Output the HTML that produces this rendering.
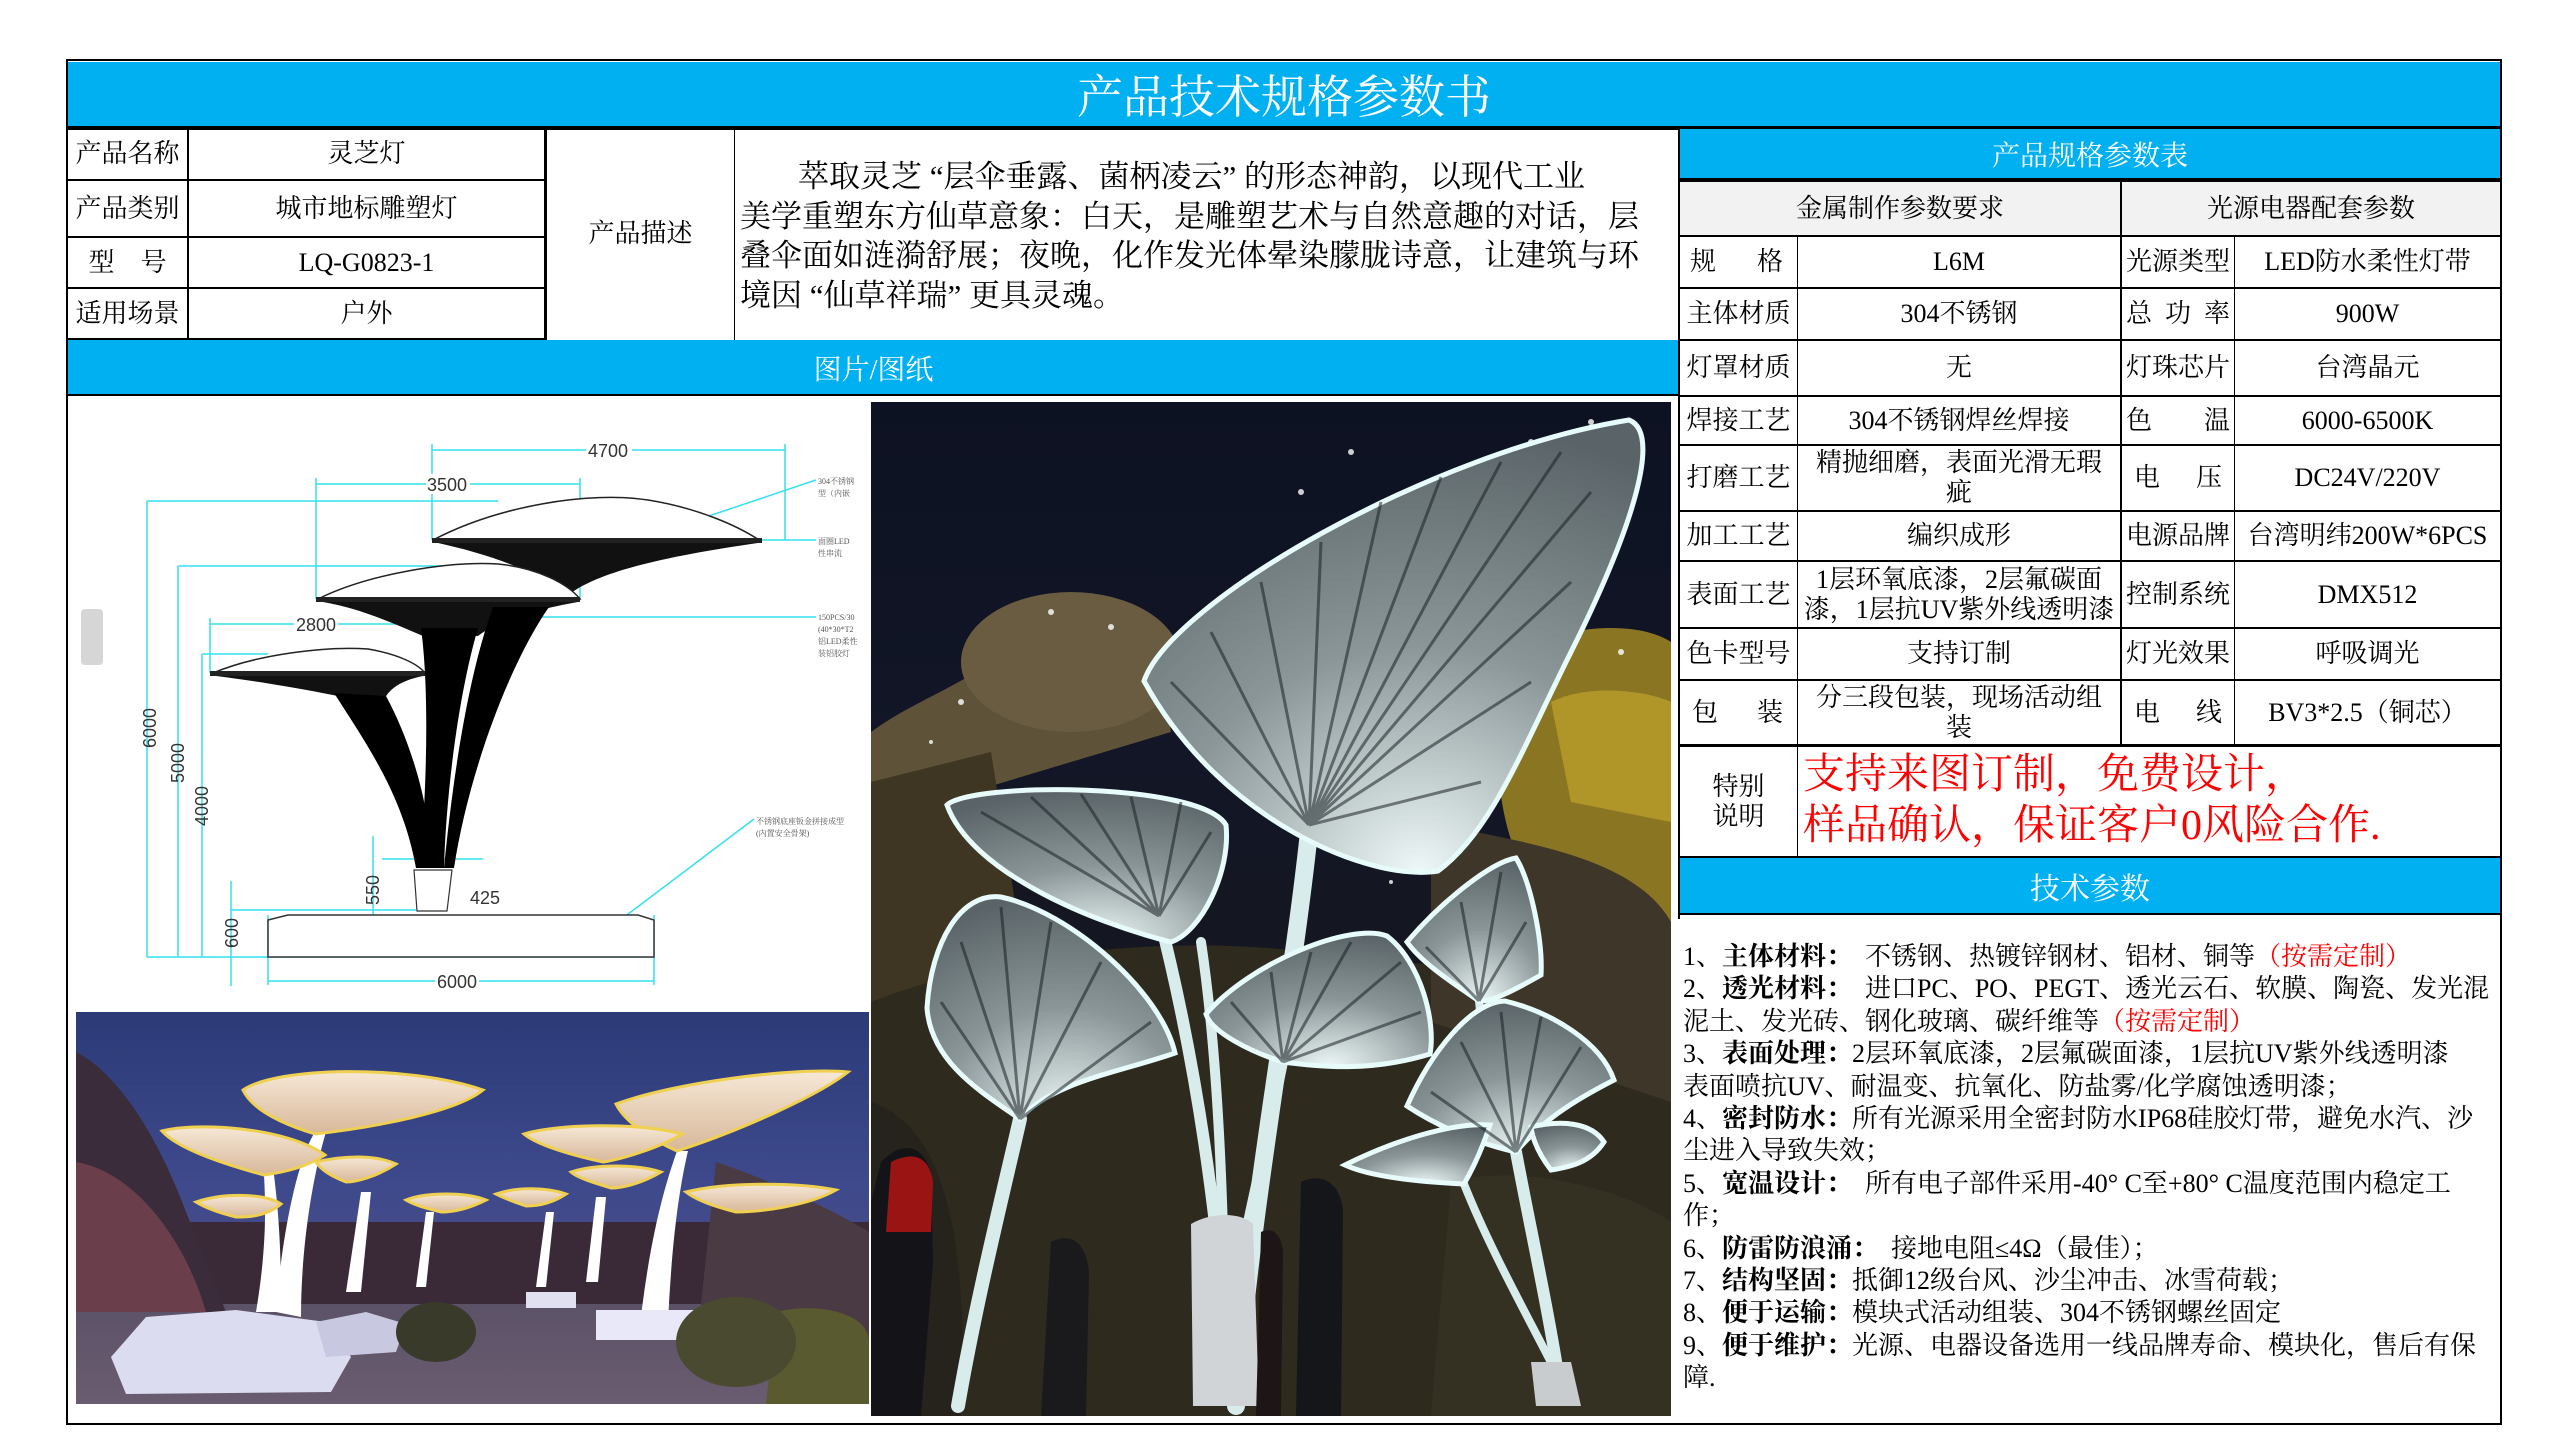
<!DOCTYPE html>
<html><head><meta charset="utf-8"><style>
*{margin:0;padding:0;box-sizing:border-box}
body{width:2560px;height:1440px;background:#fff;position:relative;overflow:hidden;font-family:"Liberation Serif","Noto Serif CJK SC",serif;color:#000}
.a{position:absolute}
.blue{background:#00b0f0;color:#fff;display:flex;align-items:center;justify-content:center}
.c{position:absolute;display:flex;align-items:center;justify-content:center;text-align:center;font-size:26px;line-height:30px}
.hl{position:absolute;height:2px;background:#000}
.vl{position:absolute;width:2px;background:#000}
.tech{position:absolute;left:1683px;top:941px;font-size:26px;line-height:32.4px;white-space:nowrap}
.r{color:#f00}
</style></head><body>
<div class="a" style="left:66px;top:59px;width:2436px;height:1366px;border:2px solid #000"></div>
<div class="a blue" style="left:68px;top:62px;width:2432px;height:64px;font-size:46px">产品技术规格参数书</div>
<div class="hl" style="left:66px;top:126px;width:2436px;height:4px"></div>

<div class="hl" style="left:66px;top:179px;width:480px"></div>
<div class="hl" style="left:66px;top:236px;width:480px"></div>
<div class="hl" style="left:66px;top:287px;width:480px"></div>
<div class="hl" style="left:66px;top:338px;width:480px;height:4px"></div>
<div class="vl" style="left:187px;top:129px;height:211px"></div>
<div class="vl" style="left:544px;top:129px;height:211px;width:3px"></div>
<div class="vl" style="left:734px;top:129px;height:211px;width:1px"></div>
<div class="c" style="left:68px;top:129px;width:119px;height:50px">产品名称</div>
<div class="c" style="left:189px;top:129px;width:355px;height:50px">灵芝灯</div>
<div class="c" style="left:68px;top:181px;width:119px;height:55px">产品类别</div>
<div class="c" style="left:189px;top:181px;width:355px;height:55px">城市地标雕塑灯</div>
<div class="c" style="left:68px;top:238px;width:119px;height:49px">型&nbsp;&nbsp;&nbsp;&nbsp;号</div>
<div class="c" style="left:189px;top:238px;width:355px;height:49px">LQ-G0823-1</div>
<div class="c" style="left:68px;top:289px;width:119px;height:50px">适用场景</div>
<div class="c" style="left:189px;top:289px;width:355px;height:50px">户外</div>
<div class="c" style="left:547px;top:129px;width:187px;height:210px">产品描述</div>
<div class="a" style="left:740px;top:157px;width:936px;font-size:31px;line-height:39.5px;white-space:nowrap">
<div style="padding-left:58px">萃取灵芝 “层伞垂露、菌柄凌云” 的形态神韵，以现代工业</div>
<div>美学重塑东方仙草意象：白天，是雕塑艺术与自然意趣的对话，层</div>
<div>叠伞面如涟漪舒展；夜晚，化作发光体晕染朦胧诗意，让建筑与环</div>
<div>境因 “仙草祥瑞” 更具灵魂。</div></div>

<div class="a blue" style="left:68px;top:340px;width:1611px;height:55px;font-size:28px">图片/图纸</div>
<div class="hl" style="left:66px;top:394px;width:1613px"></div>

<div class="vl" style="left:1678px;top:126px;height:793px"></div>
<div class="a blue" style="left:1680px;top:129px;width:820px;height:50px;font-size:28px">产品规格参数表</div>
<div class="hl" style="left:1680px;top:178px;width:820px;height:4px"></div>
<div class="a" style="left:1680px;top:182px;width:820px;height:54px;background:#f2f2f2"></div>
<div class="c" style="left:1680px;top:182px;width:440px;height:54px">金属制作参数要求</div>
<div class="c" style="left:2122px;top:182px;width:378px;height:54px">光源电器配套参数</div>
<div class="vl" style="left:2120px;top:179px;height:566px"></div>
<div class="vl" style="left:1797px;top:236px;height:677px;width:1px"></div>
<div class="vl" style="left:2234px;top:236px;height:509px;width:1px"></div>
<div class="hl" style="left:1680px;top:235px;width:820px"></div>
<div class="hl" style="left:1680px;top:287px;width:820px"></div>
<div class="hl" style="left:1680px;top:339px;width:820px"></div>
<div class="hl" style="left:1680px;top:395px;width:820px"></div>
<div class="hl" style="left:1680px;top:444px;width:820px"></div>
<div class="hl" style="left:1680px;top:510px;width:820px"></div>
<div class="hl" style="left:1680px;top:560px;width:820px"></div>
<div class="hl" style="left:1680px;top:627px;width:820px"></div>
<div class="hl" style="left:1680px;top:679px;width:820px"></div>
<div class="hl" style="left:1680px;top:744px;width:822px;height:3px"></div>
<div class="hl" style="left:1680px;top:856px;width:822px"></div>
<div class="hl" style="left:1680px;top:913px;width:822px"></div>

<div class="c" style="left:1680px;top:237px;width:117px;height:50px;justify-content:space-between;padding:0 14px 0 10px"><span>规</span><span>格</span></div>
<div class="c" style="left:1798px;top:237px;width:322px;height:50px">L6M</div>
<div class="c" style="left:2122px;top:237px;width:112px;height:50px">光源类型</div>
<div class="c" style="left:2235px;top:237px;width:265px;height:50px">LED防水柔性灯带</div>
<div class="c" style="left:1680px;top:289px;width:117px;height:50px">主体材质</div>
<div class="c" style="left:1798px;top:289px;width:322px;height:50px">304不锈钢</div>
<div class="c" style="left:2122px;top:289px;width:112px;height:50px;justify-content:space-between;padding:0 4px"><span>总</span><span>功</span><span>率</span></div>
<div class="c" style="left:2235px;top:289px;width:265px;height:50px">900W</div>
<div class="c" style="left:1680px;top:341px;width:117px;height:54px">灯罩材质</div>
<div class="c" style="left:1798px;top:341px;width:322px;height:54px">无</div>
<div class="c" style="left:2122px;top:341px;width:112px;height:54px">灯珠芯片</div>
<div class="c" style="left:2235px;top:341px;width:265px;height:54px">台湾晶元</div>
<div class="c" style="left:1680px;top:397px;width:117px;height:47px">焊接工艺</div>
<div class="c" style="left:1798px;top:397px;width:322px;height:47px">304不锈钢焊丝焊接</div>
<div class="c" style="left:2122px;top:397px;width:112px;height:47px;justify-content:space-between;padding:0 4px"><span>色</span><span>温</span></div>
<div class="c" style="left:2235px;top:397px;width:265px;height:47px">6000-6500K</div>
<div class="c" style="left:1680px;top:446px;width:117px;height:64px">打磨工艺</div>
<div class="c" style="left:1798px;top:446px;width:322px;height:64px">精抛细磨，表面光滑无瑕<br>疵</div>
<div class="c" style="left:2122px;top:446px;width:112px;height:64px;justify-content:space-between;padding:0 12px"><span>电</span><span>压</span></div>
<div class="c" style="left:2235px;top:446px;width:265px;height:64px">DC24V/220V</div>
<div class="c" style="left:1680px;top:512px;width:117px;height:48px">加工工艺</div>
<div class="c" style="left:1798px;top:512px;width:322px;height:48px">编织成形</div>
<div class="c" style="left:2122px;top:512px;width:112px;height:48px">电源品牌</div>
<div class="c" style="left:2235px;top:512px;width:265px;height:48px">台湾明纬200W*6PCS</div>
<div class="c" style="left:1680px;top:562px;width:117px;height:65px">表面工艺</div>
<div class="c" style="left:1798px;top:562px;width:322px;height:65px">1层环氧底漆，2层氟碳面<br>漆，1层抗UV紫外线透明漆</div>
<div class="c" style="left:2122px;top:562px;width:112px;height:65px">控制系统</div>
<div class="c" style="left:2235px;top:562px;width:265px;height:65px">DMX512</div>
<div class="c" style="left:1680px;top:629px;width:117px;height:50px">色卡型号</div>
<div class="c" style="left:1798px;top:629px;width:322px;height:50px">支持订制</div>
<div class="c" style="left:2122px;top:629px;width:112px;height:50px">灯光效果</div>
<div class="c" style="left:2235px;top:629px;width:265px;height:50px">呼吸调光</div>
<div class="c" style="left:1680px;top:681px;width:117px;height:64px;justify-content:space-between;padding:0 14px 0 12px"><span>包</span><span>装</span></div>
<div class="c" style="left:1798px;top:681px;width:322px;height:64px">分三段包装，现场活动组<br>装</div>
<div class="c" style="left:2122px;top:681px;width:112px;height:64px;justify-content:space-between;padding:0 12px"><span>电</span><span>线</span></div>
<div class="c" style="left:2235px;top:681px;width:265px;height:64px">BV3*2.5（铜芯）</div>

<div class="c" style="left:1680px;top:747px;width:117px;height:109px">特别<br>说明</div>
<div class="a r" style="left:1803px;top:750px;font-size:42px;line-height:51px;white-space:nowrap">支持来图订制，免费设计，<br>样品确认，保证客户0风险合作.</div>
<div class="a blue" style="left:1680px;top:858px;width:820px;height:55px;font-size:30px">技术参数</div>

<div class="tech">
<div>1、<b>主体材料：</b>&nbsp; 不锈钢、热镀锌钢材、铝材、铜等<span class="r">（按需定制）</span></div>
<div>2、<b>透光材料：</b>&nbsp; 进口PC、PO、PEGT、透光云石、软膜、陶瓷、发光混</div>
<div>泥土、发光砖、钢化玻璃、碳纤维等<span class="r">（按需定制）</span></div>
<div>3、<b>表面处理：</b>2层环氧底漆，2层氟碳面漆，1层抗UV紫外线透明漆</div>
<div>表面喷抗UV、耐温变、抗氧化、防盐雾/化学腐蚀透明漆；</div>
<div>4、<b>密封防水：</b>所有光源采用全密封防水IP68硅胶灯带，避免水汽、沙</div>
<div>尘进入导致失效；</div>
<div>5、<b>宽温设计：</b>&nbsp; 所有电子部件采用-40° C至+80° C温度范围内稳定工</div>
<div>作；</div>
<div>6、<b>防雷防浪涌：</b>&nbsp; 接地电阻≤4Ω（最佳）；</div>
<div>7、<b>结构坚固：</b>抵御12级台风、沙尘冲击、冰雪荷载；</div>
<div>8、<b>便于运输：</b>模块式活动组装、304不锈钢螺丝固定</div>
<div>9、<b>便于维护：</b>光源、电器设备选用一线品牌寿命、模块化，售后有保</div>
<div>障.</div>
</div>

<svg class="a" style="left:68px;top:396px" width="803" height="612" viewBox="0 0 803 612">
<rect x="13" y="213" width="22" height="56" rx="4" fill="#d6d6d6"/>
<g stroke="#33e0ee" stroke-width="1.5" fill="none">
<path d="M364 54H717M364 48v96M717 48v96"/>
<path d="M248 88H512M248 82v121M512 82v121"/>
<path d="M142 228H357M142 222v55"/>
<path d="M79 105H430M79 105v456"/>
<path d="M110 170H425M110 170v391"/>
<path d="M134 258H200M134 258v303"/>
<path d="M79 561H586"/>
<path d="M200 585H586M200 519v70M586 519v70"/>
<path d="M163 485v105M305 440v105M163 514H348M314 463H415"/>
<path d="M691 144H748M471 221H748"/>
<path d="M614 129L748 84M543 531L686 423"/>
</g>
<g>
<path d="M365 144C430 110 520 95 580 104C630 112 670 130 691 144Z" fill="#fff" stroke="#222" stroke-width="1.5"/>
<rect x="364" y="142" width="330" height="5" fill="#222"/>
<path d="M370 147H690C600 160 530 175 499 200C470 175 420 158 370 147Z" fill="#111"/>
<path d="M250 203C300 178 380 165 430 168C470 172 500 188 512 203Z" fill="#fff" stroke="#222" stroke-width="1.5"/>
<rect x="248" y="201" width="264" height="5" fill="#222"/>
<path d="M255 206H510C460 215 430 225 410 240L355 240C320 225 290 212 255 206Z" fill="#111"/>
<path d="M145 277C190 258 260 250 300 253C330 258 350 268 357 277Z" fill="#fff" stroke="#222" stroke-width="1.5"/>
<rect x="142" y="275" width="215" height="5" fill="#222"/>
<path d="M148 280H355C330 285 320 295 316 304L270 300C220 290 180 284 148 280Z" fill="#111"/>
<path d="M266 297C300 350 335 400 348 472L362 472C365 420 345 350 318 300Z" fill="#000"/>
<path d="M353 232C362 300 358 400 352 472L376 472C378 400 390 300 410 232Z" fill="#000"/>
<path d="M425 211C400 280 385 380 376 472L386 472C400 380 440 270 481 211Z" fill="#000"/>
<path d="M346 474H384L379 515H349Z" fill="#fff" stroke="#333" stroke-width="1.2"/>
<path d="M200 524L220 519H570L586 524V561H200Z" fill="#fff" stroke="#333" stroke-width="1.5"/>
</g>
<g font-family="Liberation Sans,sans-serif" font-size="18" fill="#333">
<rect x="518" y="44" width="46" height="20" fill="#fff"/><text x="540" y="61" text-anchor="middle">4700</text>
<rect x="358" y="78" width="44" height="20" fill="#fff"/><text x="379" y="95" text-anchor="middle">3500</text>
<rect x="226" y="218" width="44" height="20" fill="#fff"/><text x="248" y="235" text-anchor="middle">2800</text>
<text x="417" y="508" text-anchor="middle">425</text>
<rect x="367" y="576" width="44" height="20" fill="#fff"/><text x="389" y="592" text-anchor="middle">6000</text>
<text transform="translate(88 332) rotate(-90)" text-anchor="middle">6000</text>
<text transform="translate(116 367) rotate(-90)" text-anchor="middle">5000</text>
<text transform="translate(140 410) rotate(-90)" text-anchor="middle">4000</text>
<text transform="translate(311 494) rotate(-90)" text-anchor="middle">550</text>
<text transform="translate(170 537) rotate(-90)" text-anchor="middle">600</text>
</g>
<g font-size="8" fill="#555"><text x="750" y="88">304不锈钢</text><text x="750" y="100">型（内嵌</text><text x="750" y="148">面圈LED</text><text x="750" y="160">性串流</text><text x="750" y="224">150PCS/30</text><text x="750" y="236">(40*30*T2</text><text x="750" y="248">铝LED柔性</text><text x="750" y="260">装铝胶灯</text><text x="688" y="428">不锈钢底座钣金拼接成型</text><text x="688" y="440">(内置安全骨架)</text></g>
</svg>

<svg class="a" style="left:76px;top:1012px" width="793" height="392" viewBox="0 0 793 392">
<defs><linearGradient id="sk" x1="0" y1="0" x2="0" y2="1"><stop offset="0" stop-color="#2c3a78"/><stop offset=".45" stop-color="#3e4a8c"/><stop offset="1" stop-color="#5a4e78"/></linearGradient>
<linearGradient id="cap" x1="0" y1="0" x2="0" y2="1"><stop offset="0" stop-color="#f6e8d6"/><stop offset="1" stop-color="#d8b89a"/></linearGradient>
<linearGradient id="gr" x1="0" y1="0" x2="0" y2="1"><stop offset="0" stop-color="#5c5268"/><stop offset="1" stop-color="#6a5c70"/></linearGradient></defs>
<rect width="793" height="392" fill="url(#sk)"/>
<rect y="210" width="793" height="90" fill="#3a2a38"/>
<rect y="292" width="793" height="100" fill="url(#gr)"/>
<path d="M0 40C40 60 80 120 110 200L150 300H0Z" fill="#3a2c3a"/>
<path d="M0 150C60 160 110 230 130 300H0Z" fill="#6a3e4a"/>
<path d="M640 150C700 170 760 200 793 220V340H620Z" fill="#4a3a44"/>
<path d="M700 300C740 290 793 300 793 330V392H690Z" fill="#5a5a30"/>
<g fill="#fff">
<path d="M200 300C205 230 220 150 239 120L250 120C235 170 225 240 225 305Z"/>
<path d="M180 300C190 240 190 200 188 163L198 163C205 220 205 260 205 300Z"/>
<path d="M565 305C575 220 590 170 601 139L612 139C600 190 595 250 592 310Z"/>
<path d="M270 280L285 180H295L285 280Z"/><path d="M340 275L350 200H358L350 275Z"/>
<path d="M460 275L470 200H478L470 275Z"/><path d="M510 270L520 185H530L522 270Z"/>
</g>
<g fill="url(#cap)" stroke="#f0d050" stroke-width="3">
<path d="M167 78C200 55 330 52 407 78C380 100 300 115 239 122C200 110 175 95 167 78Z"/>
<path d="M540 92C600 70 720 55 772 60C740 85 660 120 601 139C570 125 548 108 540 92Z"/>
<path d="M86 119C120 110 210 115 249 143C230 155 210 160 188 163C140 150 100 135 86 119Z"/>
<path d="M448 122C480 112 560 110 606 122C580 138 540 148 527 150C490 142 460 132 448 122Z"/>
<path d="M240 150C270 143 300 143 320 152C300 165 280 170 270 170C255 164 245 158 240 150Z"/>
<path d="M495 160C520 152 560 152 585 160C565 172 545 176 535 176C515 170 500 165 495 160Z"/>
<path d="M330 188C350 180 390 180 410 188C390 198 375 200 365 200C350 196 338 193 330 188Z"/>
<path d="M420 182C440 175 470 175 490 182C475 192 460 194 450 194C438 190 428 186 420 182Z"/>
<path d="M120 190C150 180 190 182 205 192C190 205 170 205 160 205C140 200 128 195 120 190Z"/>
<path d="M610 180C650 170 720 170 760 178C730 195 680 200 660 200C640 195 620 188 610 180Z"/>
</g>
<path d="M35 345L70 305L160 298L250 310L275 345L255 380L50 382Z" fill="#dcdcf0"/>
<path d="M240 310L290 300L330 312L320 340L250 345Z" fill="#c8c8e0"/>
<rect x="520" y="298" width="100" height="30" fill="#e8e8f8"/>
<rect x="450" y="280" width="50" height="16" fill="#e0e0f0"/>
<ellipse cx="360" cy="320" rx="40" ry="30" fill="#3a3a2a"/>
<ellipse cx="660" cy="330" rx="60" ry="45" fill="#4a4a30"/>
</svg>

<svg class="a" style="left:871px;top:402px" width="800" height="1014" viewBox="0 0 800 1014">
<defs>
<linearGradient id="bg" x1="0" y1="0" x2="0" y2="1"><stop offset="0" stop-color="#0d1222"/><stop offset=".35" stop-color="#121626"/><stop offset="1" stop-color="#1a1814"/></linearGradient>
<radialGradient id="fan" cx=".55" cy="1" r="1"><stop offset="0" stop-color="#eef8f8"/><stop offset=".5" stop-color="#8a9698"/><stop offset="1" stop-color="#5a6468"/></radialGradient>
</defs>
<rect width="800" height="1014" fill="url(#bg)"/>
<g>
<path d="M0 330C40 300 100 280 150 240C170 205 230 195 280 220L300 330L0 420Z" fill="#5e5238"/>
<ellipse cx="200" cy="260" rx="110" ry="70" fill="#6a5c40"/>
<path d="M0 380L120 350L160 600L0 700Z" fill="#3e3622"/>
<path d="M640 250C700 220 770 220 800 240V520L660 480C620 420 620 320 640 250Z" fill="#8a7622"/>
<path d="M680 300C720 280 780 290 800 300V420L700 400Z" fill="#b09628"/>
<path d="M0 600C100 560 300 520 500 560C650 560 780 600 800 650V1014H0Z" fill="#2e2a1e"/>
<path d="M560 420C640 440 760 450 800 520V700L560 620Z" fill="#3e3628"/>
<path d="M0 700C60 720 100 800 90 1014H0Z" fill="#26221c"/>
<path d="M580 780C650 760 760 790 800 820V1014H560Z" fill="#343022"/>
</g>
<g fill="#fff" opacity=".8"><circle cx="180" cy="210" r="3"/><circle cx="240" cy="225" r="3"/><circle cx="90" cy="300" r="3"/><circle cx="60" cy="340" r="2"/><circle cx="480" cy="50" r="3"/><circle cx="430" cy="90" r="3"/><circle cx="660" cy="40" r="3"/><circle cx="720" cy="20" r="3"/><circle cx="750" cy="250" r="3"/><circle cx="520" cy="480" r="2"/><circle cx="30" cy="850" r="2"/><circle cx="700" cy="680" r="2"/></g>
<g stroke="#d8ecec" fill="none" stroke-linecap="round">
<path d="M438 430C420 600 380 800 365 1004" stroke-width="18"/>
<path d="M288 514C310 600 330 700 345 830" stroke-width="12"/>
<path d="M330 540C345 640 350 760 352 830" stroke-width="10"/>
<path d="M149 717C130 800 105 900 87 1004" stroke-width="14"/>
<path d="M412 660C400 720 385 780 375 830" stroke-width="10"/>
<path d="M645 750C660 830 680 920 691 998" stroke-width="12"/>
<path d="M593 782C620 850 660 920 690 980" stroke-width="8"/>
<path d="M608 599C612 640 618 680 622 700" stroke-width="8"/>
</g>
<path d="M320 822C340 810 370 810 382 822L388 1004H322Z" fill="#d0d4d6"/>
<path d="M660 960H700L710 1004H665Z" fill="#c8ccce"/>
<g stroke="#e8fbfb" stroke-width="5" fill="url(#fan)">
<path d="M273 279C300 200 560 50 758 18C790 30 765 120 700 250C650 350 620 430 567 469C500 480 350 420 273 279Z"/>
<path d="M76 403C100 380 330 380 355 423C360 470 330 530 300 540C220 520 100 470 76 403Z"/>
<path d="M335 612C380 560 480 520 516 534C550 560 565 620 559 652C500 670 450 665 412 660C380 650 340 630 335 612Z"/>
<path d="M56 606C60 540 90 490 130 495C200 510 290 590 304 651C250 670 180 680 149 717C110 690 60 660 56 606Z"/>
<path d="M536 540C570 500 620 460 645 456C660 480 672 540 670 573C640 590 620 600 608 599C580 580 550 560 536 540Z"/>
<path d="M536 704C560 650 600 600 634 599C680 610 730 640 743 678C700 700 670 720 645 750C600 740 560 720 536 704Z"/>
<path d="M474 763C520 740 580 720 619 723C610 750 600 770 593 782C550 780 500 775 474 763Z"/>
<path d="M660 725C690 718 720 720 733 740C720 760 700 765 680 768C670 755 662 740 660 725Z"/>
</g>
<g stroke="#1a2024" stroke-width="3" opacity=".55" fill="none">
<path d="M438 423L300 280M438 423L340 230M438 423L390 180M438 423L450 140M438 423L510 100M438 423L570 75M438 423L630 60M438 423L690 50M438 423L720 90M438 423L700 180M438 423L660 280M438 423L610 380"/>
<path d="M288 514L110 410M288 514L160 395M288 514L210 392M288 514L260 395M288 514L310 400M288 514L340 430"/>
<path d="M149 717L70 600M149 717L90 540M149 717L130 505M149 717L180 520M149 717L230 560M149 717L280 620"/>
<path d="M412 660L360 600M412 660L400 570M412 660L440 550M412 660L480 540M412 660L530 560M412 660L550 610"/>
<path d="M645 750L560 690M645 750L590 640M645 750L630 610M645 750L670 615M645 750L710 645"/>
<path d="M608 599L555 545M608 599L590 500M608 599L630 470M608 599L655 520"/>
</g>
<path d="M10 760C30 740 50 740 60 770L62 860L50 1014H0V800Z" fill="#141418"/>
<path d="M20 760C40 750 58 752 62 780L60 830H15Z" fill="#9a1414"/>
<path d="M180 840C200 830 215 840 218 870L215 1014H170Z" fill="#1a1a1c"/>
<path d="M430 780C450 770 470 780 472 810L470 1014H425Z" fill="#15161a"/>
<path d="M390 830C400 825 410 830 412 850L410 1014H385Z" fill="#1e1616"/>
</svg>
</body></html>
